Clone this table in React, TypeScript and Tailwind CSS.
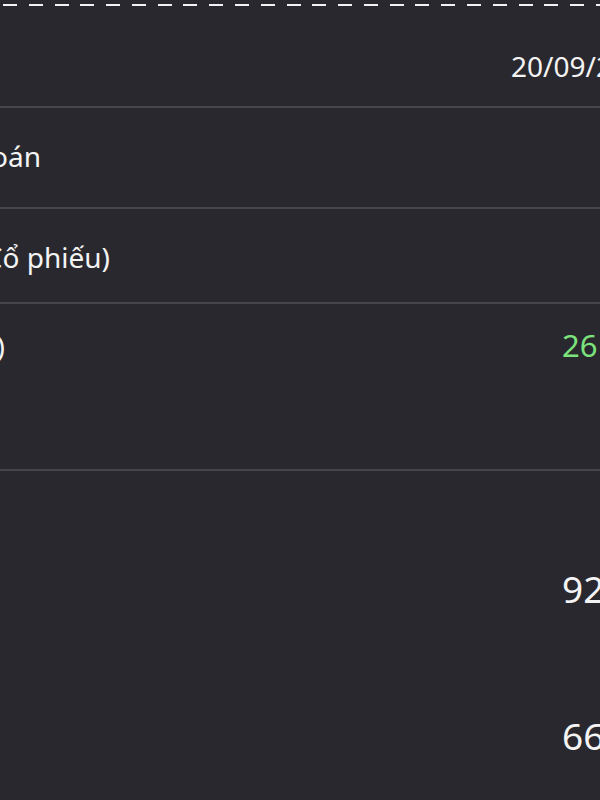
const rows = [
  { label: 'Mã chứng khoán', right: 41, height: 99, pt: 30 },
  { label: 'Số lượng (Cổ phiếu)', right: 110, height: 93, pt: 30 },
]

function Divider() {
  return <div className="h-[2px] w-full bg-[#46454b]" />
}

export default function App() {
  return (
    <div className="w-[600px] h-[800px] overflow-hidden bg-[#29282e] text-[#f4f4f4] font-['Noto_Sans',sans-serif]">
      {/* dashed separator */}
      <div className="pt-[4px] pl-[3px]">
        <div className="h-[2px] bg-[repeating-linear-gradient(90deg,#f2f2f2_0px,#f2f2f2_14px,transparent_14px,transparent_25.78px)]" />
      </div>

      {/* header with date */}
      <div className="h-[100px] pt-[42px] pl-[511px] whitespace-nowrap text-[28px] leading-[36px]">
        20/09/2024
      </div>
      <Divider />

      {rows.map((r) => (
        <div key={r.label}>
          <div className="flex text-[28px] leading-[36px]" style={{ height: r.height, paddingTop: r.pt }}>
            <div className="flex justify-end whitespace-nowrap" style={{ width: r.right }}>
              {r.label}
            </div>
          </div>
          <Divider />
        </div>
      ))}

      {/* value row */}
      <div className="flex h-[165px] pt-[24px] text-[28px] leading-[36px]">
        <div className="w-[5px] flex justify-end whitespace-nowrap">
          <span>Giá trị (Tỷ đồng)</span>
        </div>
        <div className="ml-[557px] whitespace-nowrap text-[31px] -mt-[1px] text-[#7be27c]">26 450</div>
      </div>
      <Divider />

      {/* detail rows */}
      <div className="pt-[96px] text-[37px] leading-[44px] whitespace-nowrap">
        <div className="h-[147px] pl-[562px]">92.310</div>
        <div className="h-[44px] pl-[562px]">66.780</div>
      </div>
    </div>
  )
}
